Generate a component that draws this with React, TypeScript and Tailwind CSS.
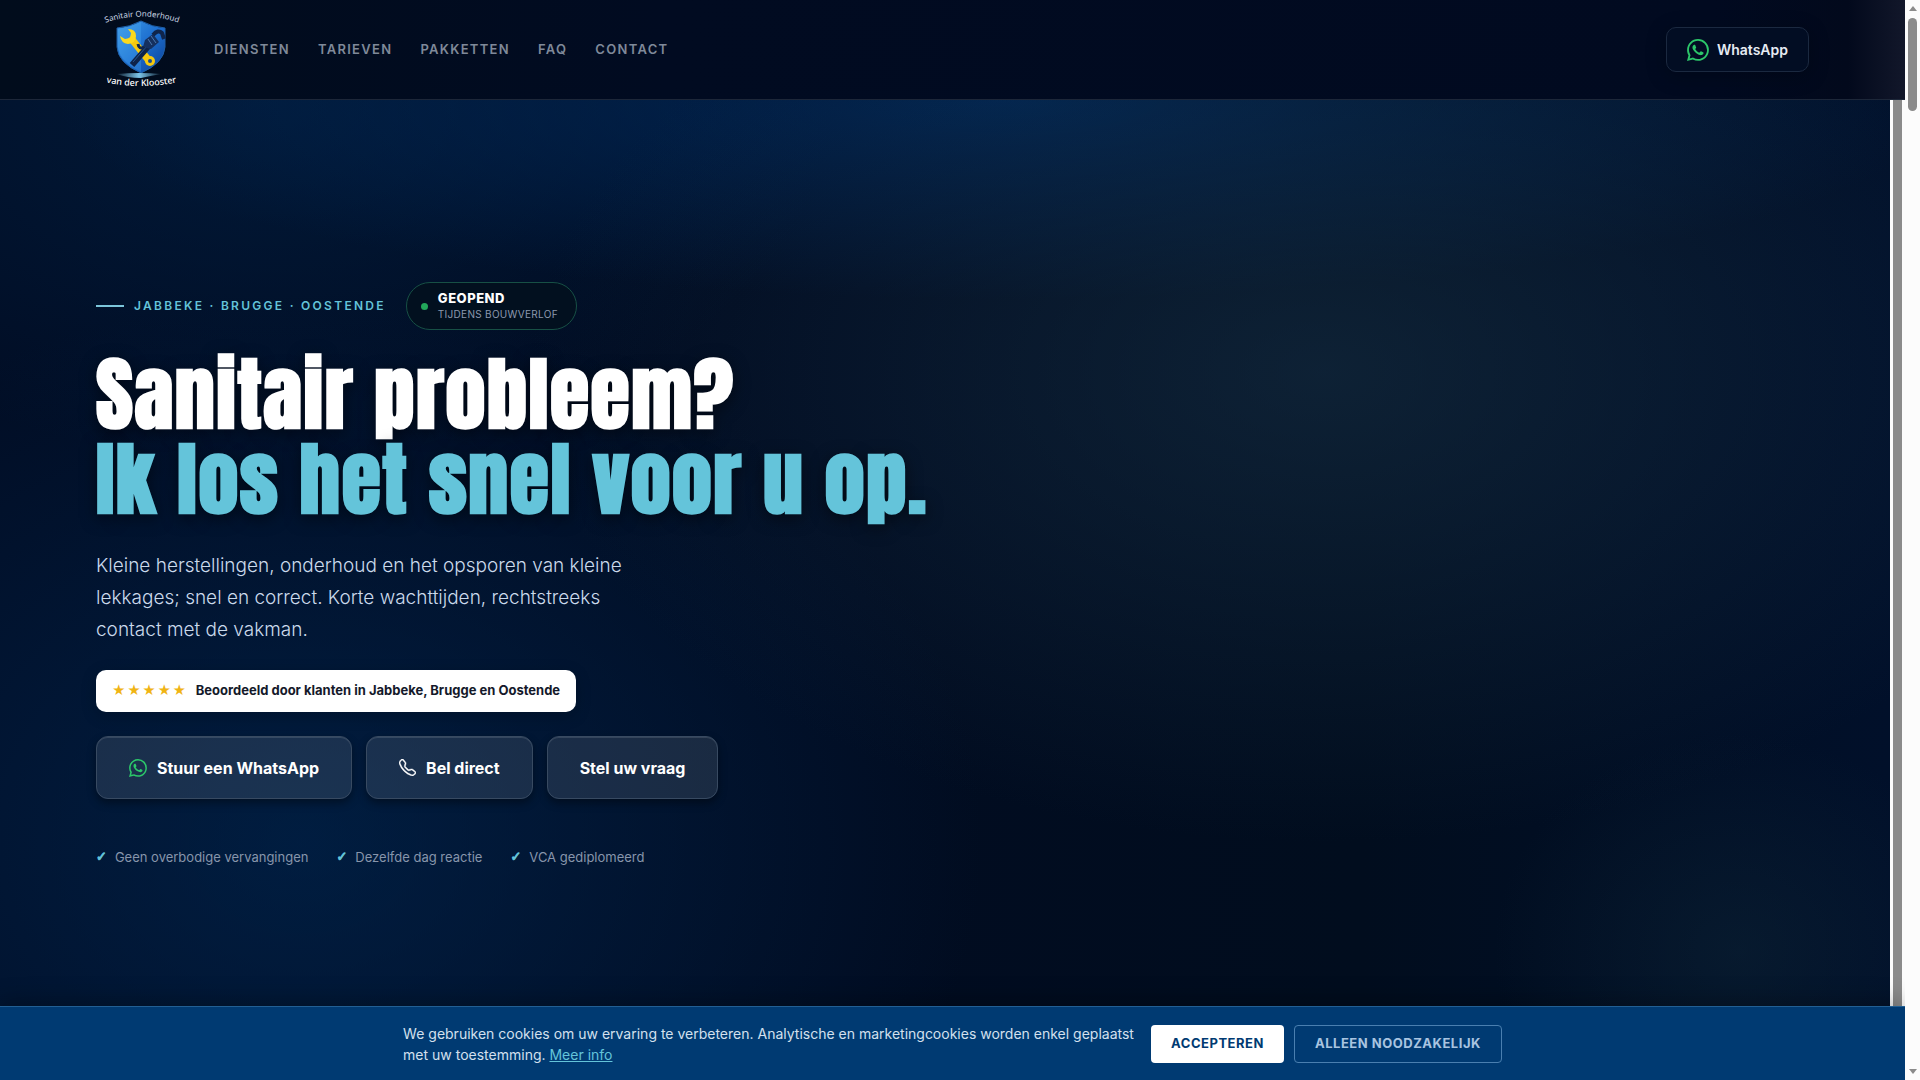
import { BsTelephone, BsWhatsapp } from "react-icons/bs"

const navItems = ["Diensten", "Tarieven", "Pakketten", "FAQ", "Contact"]

const checks = ["Geen overbodige vervangingen", "Dezelfde dag reactie", "VCA gediplomeerd"]

function Logo() {
  return (
    <svg viewBox="0 0 92 98" className="h-[98px] w-[92px] shrink-0" role="img" aria-label="Sanitair Onderhoud van der Klooster">
      <defs>
        <linearGradient id="shield" x1="0" y1="0" x2="1" y2="1">
          <stop offset="0" stopColor="#3f9be6" />
          <stop offset="0.5" stopColor="#1d6fd0" />
          <stop offset="1" stopColor="#0b3f94" />
        </linearGradient>
        <linearGradient id="wave" x1="0" y1="0" x2="1" y2="0">
          <stop offset="0" stopColor="#7cc4e8" stopOpacity="0.1" />
          <stop offset="0.5" stopColor="#7cc4e8" />
          <stop offset="1" stopColor="#7cc4e8" stopOpacity="0.1" />
        </linearGradient>
        <path id="arcTop" d="M6 23 Q46 8 86 23" />
        <path id="arcBottom" d="M8 81 Q45 89 83 81" />
      </defs>
      <text className="fill-slate-300 font-['Noto_Sans'] text-[8px]">
        <textPath href="#arcTop" startOffset="50%" textAnchor="middle">Sanitair Onderhoud</textPath>
      </text>
      <path d="M45 20 Q56 26 69 27 V46 Q68 62 45 72 Q22 62 21 46 V27 Q34 26 45 20Z" fill="url(#shield)" stroke="#1e5fa8" strokeWidth="1" />
      <path d="M45 21 Q35 26 22 28 V46 Q24 61 45 71Z" fill="#4fb0f5" opacity="0.3" />
      {/* yellow spanner */}
      <path d="M34 36 L54 61" stroke="#f6c90e" strokeWidth="7" />
      <path d="M32 28 Q40 28 40 35 Q40 42 32 43 Q25 42 24 35 L29 38 L34 37 L35 32Z" fill="#fbd91c" />
      <circle cx="54" cy="60" r="5" fill="#f6c90e" />
      <circle cx="54" cy="60" r="2" fill="#1a4d93" />
      {/* pipe wrench */}
      <path d="M36 64 L56 41" stroke="#0e2349" strokeWidth="6" />
      <path d="M37 61 L51 45" stroke="#27548f" strokeWidth="1" />
      <path d="M49 39 L57 33 L63 41 L55 48 L47 46Z" fill="#15305f" />
      <path d="M52 38 L56 44 M55 35 L60 42" stroke="#4a78b2" strokeWidth="1" />
      <path d="M57 34 Q62 28 66 32 L68 38" fill="none" stroke="#10254b" strokeWidth="4" />
      <path d="M42 43 Q43 49 48 46" fill="none" stroke="#10254b" strokeWidth="3" />
      <path d="M21 73 Q44 71 65 73 Q54 75 45 77 Q31 77 21 73Z" fill="url(#wave)" />
      <text className="fill-white font-['Noto_Sans'] text-[9px] font-medium">
        <textPath href="#arcBottom" startOffset="50%" textAnchor="middle">van der Klooster</textPath>
      </text>
    </svg>
  )
}

function Header() {
  return (
    <header className="flex h-[100px] shrink-0 items-center border-b border-[#1d2739] bg-[linear-gradient(90deg,#010c1c_0%,#010b21_35%,#010a20_90%,#02091c_97%,#12172a_100%)] px-24">
      <Logo />
      <nav className="ml-[26px] flex gap-7">
        {navItems.map((item) => (
          <a key={item} href="#" className="text-[13px] font-semibold tracking-[0.1em] text-[#7f8999] uppercase">
            {item}
          </a>
        ))}
      </nav>
      <a
        href="#"
        className="ml-auto flex h-[45px] items-center gap-2 rounded-[10px] border border-[#1b2940] bg-[#020d23] px-5 text-sm font-semibold text-[#e6ebf2] shadow-[0_4px_20px_rgba(0,0,0,0.25)]"
      >
        <BsWhatsapp className="size-[22px] text-[#2cc76a]" />
        WhatsApp
      </a>
    </header>
  )
}

function Hero() {
  const cta =
    "flex h-[63px] items-center gap-[10px] rounded-xl border border-[#384a61] bg-white/10 px-8 text-base font-bold text-white shadow-[0_4px_8px_rgba(0,0,0,0.4),inset_0_1px_0_rgba(255,255,255,0.12)]"

  return (
    <section className="min-w-0 flex-1 bg-[#010c1d] bg-[radial-gradient(ellipse_42%_52%_at_70%_30%,rgba(24,50,72,0.55),transparent),radial-gradient(ellipse_13%_24%_at_92%_94%,rgba(16,42,58,0.4),transparent),radial-gradient(ellipse_50%_22%_at_53%_0%,rgba(0,52,112,0.6),transparent),radial-gradient(ellipse_36%_60%_at_16%_82%,rgba(0,40,84,0.6),transparent),radial-gradient(ellipse_30%_40%_at_14%_0%,rgba(0,38,78,0.5),transparent),linear-gradient(90deg,#010d24_0%,#010c21_45%,#010d1e_72%,#01102a_100%)] px-24 pt-[182px]">
      <div className="flex items-center">
        <span className="mr-[10px] h-0.5 w-7 bg-[#7cc5da]" />
        <span className="text-xs font-semibold tracking-[0.19em] text-[#64c4da] uppercase">Jabbeke · Brugge · Oostende</span>
        <div className="ml-5 flex h-12 items-center gap-[10px] rounded-full border border-[#175045] bg-[#02101f] pr-[18px] pl-[14px]">
          <span className="size-[7px] rounded-full bg-[#22a75a]" />
          <span className="flex flex-col">
            <span className="text-[13px] leading-4 font-extrabold tracking-[0.04em] text-white">GEOPEND</span>
            <span className="text-[10px] leading-4 tracking-[0.03em] text-[#8c98ae]">TIJDENS BOUWVERLOF</span>
          </span>
        </div>
      </div>

      <h1 className="mt-[22px] flex flex-col font-['Anton',sans-serif] text-[80px] leading-[85px] font-bold tracking-[0.02em] text-white [text-shadow:0_4px_16px_rgba(0,0,0,0.5)]">
        <span>Sanitair probleem?</span>
        <span className="text-[#64c4da]">Ik los het snel voor u op.</span>
      </h1>

      <p className="mt-7 max-w-[560px] text-[19px] leading-8 font-light text-[#cbdaec]">
        Kleine herstellingen, onderhoud en het opsporen van kleine lekkages; snel en correct. Korte wachttijden, rechtstreeks contact
        met de vakman.
      </p>

      <div className="mt-6 flex h-[42px] w-fit items-center gap-2 rounded-[10px] bg-white px-4 shadow-[0_4px_16px_rgba(0,0,0,0.2)]">
        <span className="text-[13px] tracking-[0.12em] text-[#f0b413]">★★★★★</span>
        <span className="text-[13px] font-bold text-[#14192a]">Beoordeeld door klanten in Jabbeke, Brugge en Oostende</span>
      </div>

      <div className="mt-6 flex gap-[14px]">
        <a href="#" className={cta}>
          <BsWhatsapp className="size-[18px] text-[#2cc76a]" />
          Stuur een WhatsApp
        </a>
        <a href="#" className={cta}>
          <BsTelephone className="size-[17px] stroke-white" strokeWidth={0.4} />
          Bel direct
        </a>
        <a href="#" className={cta}>Stel uw vraag</a>
      </div>

      <ul className="mt-12 flex gap-7 text-[13px] leading-5 text-[#8795ab]">
        {checks.map((check) => (
          <li key={check} className="flex gap-2">
            <span className="font-['DejaVu_Sans',sans-serif] text-[13px] leading-5 font-bold text-[#64c4da] [-webkit-text-stroke:1px_#64c4da]">✓</span>
            <span>{check}</span>
          </li>
        ))}
      </ul>
    </section>
  )
}

function CookieBar() {
  return (
    <div className="relative flex h-[74px] shrink-0 items-center justify-center border-t border-[#225f93] bg-[#003a72] shadow-[0_-4px_24px_rgba(0,0,0,0.3)]">
      <p className="mr-4 w-[732px] text-sm leading-[21px] text-[#d3e0ee]">
        We gebruiken cookies om uw ervaring te verbeteren. Analytische en marketingcookies worden enkel geplaatst met uw toestemming.{" "}
        <a href="#" className="text-[#64c4da] underline">
          Meer info
        </a>
      </p>
      <div className="flex gap-[10px]">
        <button className="h-[38px] rounded bg-white px-5 text-[13px] font-bold tracking-[0.04em] text-[#003a72]">ACCEPTEREN</button>
        <button className="h-[38px] rounded border border-[#4a7fb0] px-5 text-[13px] font-bold tracking-[0.04em] text-[#a9c4e0]">
          ALLEEN NOODZAKELIJK
        </button>
      </div>
    </div>
  )
}

export default function App() {
  return (
    <div className="flex h-screen overflow-hidden bg-white font-['Inter',sans-serif]">
      <div className="flex min-w-0 flex-1 flex-col">
        <Header />
        <div className="flex min-h-0 flex-1">
          <Hero />
          <div className="flex w-[15px] justify-center bg-[#fcfcfc]">
            <div className="w-[9px] bg-[#8b8b8b]" />
          </div>
        </div>
        <CookieBar />
      </div>
      <div className="relative flex w-[15px] flex-col items-center justify-between bg-[#fcfcfc] py-[6px]">
        <div className="flex flex-col items-center gap-[7px]">
          <div className="size-0 border-x-4 border-b-5 border-x-transparent border-b-[#8b8b8b]" />
          <div className="h-[93px] w-[9px] rounded-full bg-[#8b8b8b]" />
        </div>
        <div className="size-0 border-x-4 border-t-5 border-x-transparent border-t-[#8b8b8b]" />
      </div>
    </div>
  )
}
